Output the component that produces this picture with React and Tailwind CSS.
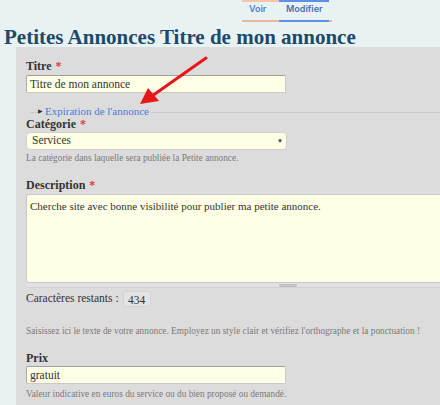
import React from 'react';

const serif = { fontFamily: '"Liberation Serif", "Noto Serif", serif' };
const sans = { fontFamily: 'Inter, "Open Sans", sans-serif' };

const Label = ({ children, required }) => (
  <div className="h-[14px] text-[12px] font-bold text-[#333] leading-[14px]">
    {children}
    {required && <span className="text-[#e0393e] ml-[4px]">*</span>}
  </div>
);

const Help = ({ children }) => (
  <div className="h-[12px] text-[9.3px] text-[#7a7a7a] leading-[12px] whitespace-nowrap">{children}</div>
);

const TextInput = ({ value }) => (
  <div className="w-[260px] h-[18px] bg-[#ffffe6] border border-[#c9c9c9] border-t-[#a0a0a0] border-l-[#acacac] rounded-[2px] px-[3px] text-[11.5px] leading-[16px] text-[#333]">
    {value}
  </div>
);

const App = () => {
  return (
    <div className="relative w-[440px] h-[405px] overflow-hidden bg-[#e8f2f3]" style={serif}>
      {/* tabs */}
      <div className="flex h-[22px] pl-[242px]">
        <div className="relative w-[37px] flex items-end border-b-2 border-[#ecb798]">
          <div className="absolute top-0 left-0 right-0 h-[2px] bg-[#f3c6a9]" />
          <span className="pl-[7px] pb-[5px] text-[9px] font-semibold text-[#4c7fd0]" style={sans}>Voir</span>
        </div>
        <div className="relative w-[50px] flex items-end border-b-2 border-[#5d8fe4]">
          <div className="absolute top-0 left-0 right-0 h-[2px] bg-[#5d8fe4]" />
          <span className="pl-[7px] pb-[5px] text-[9px] font-semibold text-[#4c6fb8]" style={sans}>Modifier</span>
        </div>
        <div className="w-[3px] border-b-2 border-[#ecb798]" />
      </div>

      {/* title */}
      <h1 className="pl-[4px] pt-[6px] h-[25px] text-[21px] leading-[19px] font-bold text-[#1b4a6b] whitespace-nowrap">
        Petites Annonces Titre de mon annonce
      </h1>

      {/* panel */}
      <div className="ml-[16px] w-[460px] h-[400px] bg-[#dddcdd] pl-[10px] pt-[12px]">
        <Label required>Titre</Label>
        <div className="mt-[2px]"><TextInput value="Titre de mon annonce" /></div>

        <div className="relative mt-[13px] h-[11px] ml-[4px]">
          <div className="absolute left-0 right-0 top-[6px] h-[1px] bg-[#cbcaca]" />
          <div className="absolute left-[8px] top-0 flex items-center gap-[2px] bg-[#dddcdd] pr-[2px] text-[11px] leading-[11px] text-[#4a7bd6]">
            <span className="text-[6px] text-[#333]">▶</span>
            <span>Expiration de l'annonce</span>
          </div>
        </div>

        <Label required>Catégorie</Label>
        <div className="mt-[1px] w-[261px] h-[18px] bg-[#ffffe6] border border-[#d0d0d0] rounded-[4px] pl-[5px] pr-[3px] flex items-center justify-between text-[11.5px] text-[#333]">
          <span>Services</span>
          <span className="text-[6px] text-[#333]">▼</span>
        </div>
        <div className="mt-[2px]"><Help>La catégorie dans laquelle sera publiée la Petite annonce.</Help></div>

        <div className="mt-[14px]"><Label required>Description</Label></div>
        <div className="mt-[2px] w-[440px] h-[89px] bg-[#ffffe6] border border-[#c8c8c8] rounded-[3px] px-[3px] pt-[4px] text-[11px] leading-[14px] text-[#333]">
          Cherche site avec bonne visibilité pour publier ma petite annonce.
        </div>
        <div className="relative w-[440px] h-[5px] bg-[#e3e2e3] border-b border-[#d2d2d2]">
          <div className="absolute left-[253px] top-[1px] w-[18px] h-[3px] bg-[#c2c2c2] rounded-[1px]" />
        </div>

        <div className="mt-[2px] flex items-center gap-[4px] text-[11.5px] text-[#333]">
          <span>Caractères restants :</span>
          <span className="w-[28px] h-[16px] leading-[16px] text-center bg-[#e4e3e4] border border-[#d4d4d4] rounded-[2px]">434</span>
        </div>

        <div className="mt-[18px]"><Help>Saisissez ici le texte de votre annonce. Employez un style clair et vérifiez l'orthographe et la ponctuation !</Help></div>

        <div className="mt-[14px]"><Label>Prix</Label></div>
        <div className="mt-[1px]"><TextInput value="gratuit" /></div>
        <div className="mt-[4px]"><Help>Valeur indicative en euros du service ou du bien proposé ou demandé.</Help></div>
      </div>

      {/* red annotation arrow */}
      <svg className="absolute left-0 top-0 pointer-events-none" width="440" height="405">
        <line x1="206" y1="58" x2="152" y2="96" stroke="#e8161b" strokeWidth="3" strokeLinecap="round" />
        <polygon points="140,104 148,88 159,101" fill="#e8161b" />
      </svg>
    </div>
  );
};

export default App;
